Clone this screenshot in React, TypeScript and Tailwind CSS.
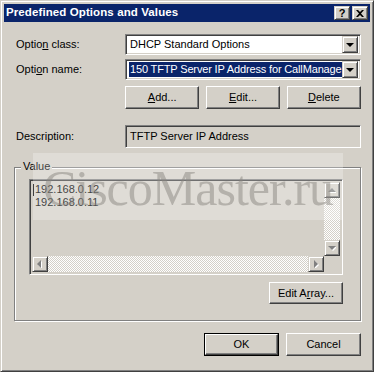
const raised =
  "border border-t-white border-l-white border-r-[#404040] border-b-[#404040] shadow-[inset_-1px_-1px_#808080] bg-[#d4d0c8]"
const sunken =
  "border border-t-[#808080] border-l-[#808080] border-r-white border-b-white shadow-[inset_1px_1px_#404040,inset_-1px_-1px_#d4d0c8]"
const track =
  "bg-[image:repeating-conic-gradient(#ffffff_0%_25%,#d4d0c8_0%_50%)] bg-size-[2px_2px]"

function Arrow({ dir, dark = false }: { dir: "up" | "down" | "left" | "right"; dark?: boolean }) {
  const pts = {
    up: "4,2 0,6 8,6",
    down: "0,2 8,2 4,6",
    left: "5,0 5,8 1,4",
    right: "2,0 2,8 6,4",
  }[dir]
  return (
    <svg width="8" height="8" viewBox="0 0 8 8" className="block">
      {!dark && <polygon points={pts} fill="#ffffff" transform="translate(1,1)" />}
      <polygon points={pts} fill={dark ? "#000000" : "#808080"} />
    </svg>
  )
}

function Button({ children, isDefault = false, className = "" }: { children: React.ReactNode; isDefault?: boolean; className?: string }) {
  if (isDefault) {
    return (
      <div className={`border border-black ${className}`}>
        <div className={`${raised} h-full flex items-center justify-center`}>{children}</div>
      </div>
    )
  }
  return <div className={`${raised} flex items-center justify-center ${className}`}>{children}</div>
}

function Combo({ children, selected = false }: { children: React.ReactNode; selected?: boolean }) {
  return (
    <div className={`${sunken} bg-white w-[236px] h-[21px] flex items-center p-[2px]`}>
      <div className="flex-1 h-full overflow-hidden flex items-center pl-[1px]">
        {selected ? (
          <span className="bg-[#0a246a] text-white h-full flex items-center pl-[1px] whitespace-nowrap tracking-[-0.15px]">
            {children}
          </span>
        ) : (
          <span className="pl-[1px] whitespace-nowrap">{children}</span>
        )}
      </div>
      <div className="w-[16px] h-[17px] border border-t-[#d4d0c8] border-l-[#d4d0c8] border-r-[#404040] border-b-[#404040] shadow-[inset_1px_1px_#ffffff,inset_-1px_-1px_#808080] bg-[#d4d0c8] flex items-center justify-center">
        <Arrow dir="down" dark />
      </div>
    </div>
  )
}

function ScrollBtn({ dir }: { dir: "up" | "down" | "left" | "right" }) {
  return (
    <div className="w-[16px] h-[16px] border border-t-[#d4d0c8] border-l-[#d4d0c8] border-r-[#404040] border-b-[#404040] shadow-[inset_1px_1px_#ffffff,inset_-1px_-1px_#808080] bg-[#d4d0c8] flex items-center justify-center shrink-0">
      <Arrow dir={dir} />
    </div>
  )
}

export default function App() {
  return (
    <div className="w-[374px] h-[372px] bg-[#d4d0c8] text-[11px] text-black font-['Liberation_Sans',Arial,sans-serif] leading-none border border-t-[#d4d0c8] border-l-[#d4d0c8] border-r-[#404040] border-b-[#404040] shadow-[inset_1px_1px_#ffffff,inset_-1px_-1px_#808080] p-[3px] flex flex-col relative overflow-hidden">
      {/* title bar */}
      <div className="h-[18px] bg-[#0a246a] flex items-center pl-[2px] pr-[2px] shrink-0">
        <span className="text-white font-bold text-[11.5px] tracking-[0.1px] flex-1">Predefined Options and Values</span>
        <div className="w-[16px] h-[14px] border border-t-[#d4d0c8] border-l-[#d4d0c8] border-r-[#404040] border-b-[#404040] shadow-[inset_1px_1px_#ffffff,inset_-1px_-1px_#808080] bg-[#d4d0c8] flex items-center justify-center font-bold text-[11px]">
          ?
        </div>
        <div className="ml-[2px] w-[16px] h-[14px] border border-t-[#d4d0c8] border-l-[#d4d0c8] border-r-[#404040] border-b-[#404040] shadow-[inset_1px_1px_#ffffff,inset_-1px_-1px_#808080] bg-[#d4d0c8] flex items-center justify-center">
          <svg width="8" height="7" viewBox="0 0 8 7">
            <path d="M0 0h2l2 2 2-2h2L5 3.5 8 7H6L4 5 2 7H0l3-3.5z" fill="#000" />
          </svg>
        </div>
      </div>

      {/* body */}
      <div className="flex flex-col pl-[12px] pr-[9px]">
        <div className="flex items-center mt-[12px] h-[21px]">
          <span className="w-[109px]">
            Optio<u>n</u> class:
          </span>
          <Combo>DHCP Standard Options</Combo>
        </div>
        <div className="flex items-center mt-[4px] h-[21px]">
          <span className="w-[109px]">
            Opti<u>o</u>n name:
          </span>
          <Combo selected>150 TFTP Server IP Address for CallManager</Combo>
        </div>
        <div className="flex mt-[6px] ml-[109px] gap-[7px]">
          <Button className="w-[75px] h-[23px]">
            <u>A</u>dd...
          </Button>
          <Button className="w-[74px] h-[23px]">
            <u>E</u>dit...
          </Button>
          <Button className="w-[75px] h-[23px]">
            <u>D</u>elete
          </Button>
        </div>
        <div className="flex items-center mt-[16px] h-[23px]">
          <span className="w-[109px]">Description:</span>
          <div className={`${sunken} w-[236px] h-[23px] flex items-center pl-[4px] bg-[#d4d0c8]`}>TFTP Server IP Address</div>
        </div>

        {/* group box */}
        <div className="mt-[19px] ml-[-2px] w-[347px] h-[154px] border border-[#808080] shadow-[inset_1px_1px_#ffffff,1px_1px_#ffffff] relative flex flex-col pl-[14px] pt-[11px]">
          <span className="absolute left-[6px] top-[-7px] bg-[#d4d0c8] px-[2px]">Value</span>
          <div className={`${sunken} w-[314px] h-[96px] flex flex-col p-[2px] bg-[#d4d0c8]`}>
            <div className="flex flex-1">
              <div className="flex-1 flex flex-col pl-[1px] pt-[1px] leading-[13px]">
                <div className="flex">
                  <span className="w-px h-[12px] bg-black mr-[1px] mt-[1px]" />
                  <span>192.168.0.12</span>
                </div>
                <div className="pl-[2px]">192.168.0.11</div>
              </div>
              <div className={`w-[16px] flex flex-col ${track}`}>
                <ScrollBtn dir="up" />
                <div className="flex-1" />
                <ScrollBtn dir="down" />
              </div>
            </div>
            <div className="flex h-[16px]">
              <div className={`flex flex-1 ${track}`}>
                <ScrollBtn dir="left" />
                <div className="flex-1" />
                <ScrollBtn dir="right" />
              </div>
              <div className="w-[16px] bg-[#d4d0c8]" />
            </div>
          </div>
          <div className="flex justify-end w-[314px] mt-[7px]">
            <Button className="w-[74px] h-[22px]">
              Edit A<u>r</u>ray...
            </Button>
          </div>
        </div>

        <div className="flex justify-end gap-[7px] mt-[12px] w-[345px]">
          <Button isDefault className="w-[75px] h-[23px]">
            OK
          </Button>
          <Button className="w-[75px] h-[23px]">Cancel</Button>
        </div>
      </div>

      {/* watermark */}
      <div className="absolute left-[32px] top-[152px] w-[310px] h-[67px] bg-white/25 flex items-center justify-center pointer-events-none">
        <span className="font-['Liberation_Serif',serif] text-[50px] tracking-[-1px] text-[#8a8680]/50 leading-none mt-[2px]">
          CiscoMaster.ru
        </span>
      </div>
    </div>
  )
}
